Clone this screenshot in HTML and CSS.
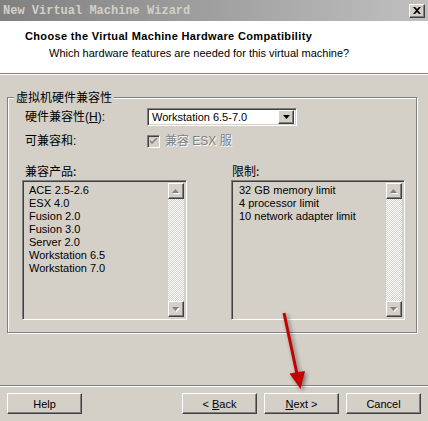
FILE: index.html
```html
<!DOCTYPE html>
<html lang="zh-CN">
<head>
    <meta charset="UTF-8">
    <title>New Virtual Machine Wizard</title>
    <link rel="stylesheet" href="styles.css">
</head>
<body>
    <div class="window">
        <div class="titlebar">
            <span class="title">New Virtual Machine Wizard</span>
            <span class="close raised">
                <svg width="8" height="7" viewBox="0 0 8 7"><path d="M0 0h2l2 2 2-2h2L5 3.5 8 7H6L4 5 2 7H0l3-3.5z" fill="#000"/></svg>
            </span>
        </div>

        <div class="header">
            <div class="header-title">Choose the Virtual Machine Hardware Compatibility</div>
            <div class="header-sub">Which hardware features are needed for this virtual machine?</div>
        </div>

        <div class="main">
            <fieldset class="group">
                <legend>虚拟机硬件兼容性</legend>

                <div class="form-row row-hw">
                    <span class="label">硬件兼容性(<u>H</u>):</span>
                    <div class="combo sunken">
                        <span class="combo-text">Workstation 6.5-7.0</span>
                        <span class="combo-btn raised">
                            <svg width="7" height="4" viewBox="0 0 7 4"><path d="M0 0h7L3.5 4z" fill="#000"/></svg>
                        </span>
                    </div>
                </div>

                <div class="form-row row-compat">
                    <span class="label">可兼容和:</span>
                    <div class="check disabled">
                        <span class="check-box sunken">
                            <svg width="7" height="7" viewBox="0 0 7 7"><path d="M0 2l2 2 5-5v2L2 6 0 4z" fill="#808080"/></svg>
                        </span>
                        <span class="check-text">兼容 ESX 服</span>
                    </div>
                </div>

                <div class="lists">
                    <div class="list-col col-products">
                        <div class="list-label">兼容产品:</div>
                        <div class="listbox sunken">
                            <ul class="items">
                                <li>ACE 2.5-2.6</li>
                                <li>ESX 4.0</li>
                                <li>Fusion 2.0</li>
                                <li>Fusion 3.0</li>
                                <li>Server 2.0</li>
                                <li>Workstation 6.5</li>
                                <li>Workstation 7.0</li>
                            </ul>
                            <div class="scrollbar">
                                <span class="sb-btn raised">
                                    <svg width="8" height="5" viewBox="0 0 8 5"><path d="M1 5h7L4.5 1z" fill="#fff"/><path d="M0 4h7L3.5 0z" fill="#808080"/></svg>
                                </span>
                                <span class="sb-track"></span>
                                <span class="sb-btn raised">
                                    <svg width="8" height="5" viewBox="0 0 8 5"><path d="M1 1h7L4.5 5z" fill="#fff"/><path d="M0 0h7L3.5 4z" fill="#808080"/></svg>
                                </span>
                            </div>
                        </div>
                    </div>

                    <div class="list-col col-limits">
                        <div class="list-label">限制:</div>
                        <div class="listbox sunken">
                            <ul class="items">
                                <li>32 GB memory limit</li>
                                <li>4 processor limit</li>
                                <li>10 network adapter limit</li>
                            </ul>
                            <div class="scrollbar">
                                <span class="sb-btn raised">
                                    <svg width="8" height="5" viewBox="0 0 8 5"><path d="M1 5h7L4.5 1z" fill="#fff"/><path d="M0 4h7L3.5 0z" fill="#808080"/></svg>
                                </span>
                                <span class="sb-track"></span>
                                <span class="sb-btn raised">
                                    <svg width="8" height="5" viewBox="0 0 8 5"><path d="M1 1h7L4.5 5z" fill="#fff"/><path d="M0 0h7L3.5 4z" fill="#808080"/></svg>
                                </span>
                            </div>
                        </div>
                    </div>
                </div>
            </fieldset>
        </div>

        <div class="footer">
            <button class="btn raised">Help</button>
            <div class="footer-right">
                <button class="btn raised">&lt; <u>B</u>ack</button>
                <button class="btn raised"><u>N</u>ext &gt;</button>
                <button class="btn raised">Cancel</button>
            </div>
        </div>

        <svg class="arrow" width="428" height="421" viewBox="0 0 428 421">
            <path d="M284 313L297 374" stroke="#c40000" stroke-width="3" fill="none"/>
            <path d="M289.5 373.5L305 371L300.5 389z" fill="#c40000"/>
        </svg>
    </div>
</body>
</html>
```

FILE: styles.css
```css
html, body {
    margin: 0;
    padding: 0;
    background-color: #d4d0c8;
}

.window {
    width: 428px;
    height: 421px;
    display: flex;
    flex-direction: column;
    position: relative;
    overflow: hidden;
    font-family: "Liberation Sans", Arial, sans-serif;
    font-size: 11px;
    color: #000;
}

/* bevels */
.raised {
    border: 1px solid;
    border-color: #fff #404040 #404040 #fff;
    box-shadow: inset -1px -1px 0 #808080;
    background-color: #d4d0c8;
    box-sizing: border-box;
}

.sunken {
    border: 1px solid;
    border-color: #808080 #fff #fff #808080;
    box-shadow: inset 1px 1px 0 #404040, inset -1px -1px 0 #d4d0c8;
    box-sizing: border-box;
}

/* title bar */
.titlebar {
    height: 21px;
    flex: none;
    display: flex;
    align-items: center;
    justify-content: space-between;
    padding: 0 3px 0 3px;
    background: linear-gradient(to right, #808080, #c0c0c0);
    box-sizing: border-box;
}

.title {
    font-family: "Liberation Mono", "Courier New", monospace;
    font-weight: bold;
    font-size: 12px;
    color: #d4d0c8;
}

.close {
    width: 16px;
    height: 14px;
    display: flex;
    align-items: center;
    justify-content: center;
}

/* header */
.header {
    height: 53px;
    flex: none;
    background: #fff;
    border-bottom: 1px solid #808080;
    box-shadow: 0 1px 0 #fff;
    box-sizing: border-box;
    padding: 8px 0 0 25px;
}

.header-title {
    font-weight: bold;
    line-height: 14px;
    letter-spacing: 0.35px;
}

.header-sub {
    line-height: 14px;
    margin-top: 3px;
    padding-left: 24px;
}

/* group */
.main {
    flex: 1;
}

.group {
    margin: 16px 0 0 7px;
    width: 410px;
    box-sizing: border-box;
    padding: 0 11px 12px 14px;
    border: 1px solid #808080;
    box-shadow: 1px 1px 0 #fff, inset 1px 1px 0 #fff;
    min-width: 0;
}

.group legend {
    font-family: "Noto Sans CJK SC", sans-serif;
    font-size: 12px;
    line-height: 14px;
    padding: 0 2px;
    margin-left: -8px;
    background: #d4d0c8;
}

.form-row {
    display: flex;
    align-items: center;
}

.label {
    width: 122px;
    margin-left: 3px;
    font-family: "Liberation Sans", "Noto Sans CJK SC", sans-serif;
    font-size: 12px;
    line-height: 14px;
}

.row-hw {
    margin-top: 4px;
    height: 18px;
}

.combo {
    width: 150px;
    height: 18px;
    background: #fff;
    display: flex;
    align-items: center;
    justify-content: space-between;
    padding: 2px;
}

.combo-text {
    padding-left: 2px;
    line-height: 13px;
}

.combo-btn {
    width: 16px;
    height: 14px;
    display: flex;
    align-items: center;
    justify-content: center;
}

.row-compat {
    margin-top: 5px;
    height: 20px;
}

.check {
    display: flex;
    align-items: center;
    height: 13px;
}

.check-box {
    width: 13px;
    height: 13px;
    background: #d4d0c8;
    display: flex;
    align-items: center;
    justify-content: center;
}

.check-text {
    margin-left: 5px;
    color: #808080;
    text-shadow: 1px 1px 0 #fff;
    font-family: "Liberation Sans", "Noto Sans CJK SC", sans-serif;
    font-size: 12px;
    line-height: 13px;
}

/* lists */
.lists {
    display: flex;
    gap: 44px;
    margin-top: 13px;
}

.col-products {
    width: 165px;
}

.col-limits {
    width: 174px;
}

.list-label {
    font-family: "Noto Sans CJK SC", sans-serif;
    font-size: 12px;
    line-height: 14px;
    margin: 0 0 2px 3px;
}

.col-limits .list-label {
    margin-left: 1px;
}

.listbox {
    height: 140px;
    display: flex;
    padding: 2px;
}

.items {
    flex: 1;
    list-style: none;
    margin: 0;
    padding: 1px 0 0 4px;
}

.col-limits .items {
    padding-left: 5px;
}

.items li {
    line-height: 13px;
}

.scrollbar {
    width: 16px;
    display: flex;
    flex-direction: column;
}

.sb-btn {
    height: 16px;
    flex: none;
    display: flex;
    align-items: center;
    justify-content: center;
}

.sb-track {
    flex: 1;
    background: repeating-conic-gradient(#fff 0 25%, #d4d0c8 0 50%) 0 0 / 2px 2px;
}

/* footer */
.footer {
    flex: none;
    height: 36px;
    box-sizing: border-box;
    border-top: 1px solid #808080;
    box-shadow: inset 0 1px 0 #fff;
    padding: 7px 7px 0 7px;
    display: flex;
    justify-content: space-between;
}

.footer-right {
    display: flex;
    gap: 7px;
}

.btn {
    width: 75px;
    height: 21px;
    padding: 0;
    font-family: "Liberation Sans", Arial, sans-serif;
    font-size: 11px;
    color: #000;
}

/* annotation */
.arrow {
    position: absolute;
    left: 0;
    top: 0;
    pointer-events: none;
    filter: drop-shadow(2px 2px 2px rgba(0, 0, 0, 0.45));
}
```
